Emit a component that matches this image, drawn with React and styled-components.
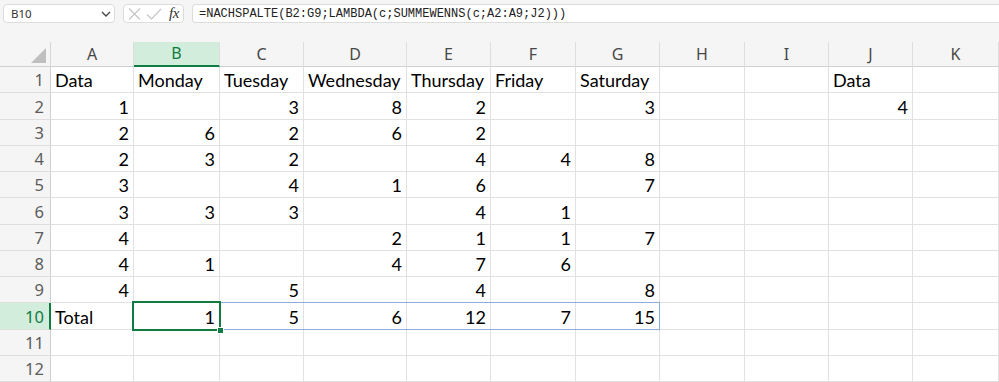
import React from 'react';
import styled, { createGlobalStyle } from 'styled-components';

const GlobalStyle = createGlobalStyle`
  html, body {
    margin: 0;
    padding: 0;
    background: #f5f5f5;
    overflow: hidden;
  }
`;

const Page = styled.div`
  width: 999px;
  height: 382px;
  background: #f5f5f5;
  overflow: hidden;
`;

const FormulaBar = styled.div`
  height: 42px;
  box-sizing: border-box;
  padding: 4px 0 0 3px;
  display: flex;
  align-items: flex-start;
  gap: 8px;
`;

const Box = styled.div`
  height: 19px;
  box-sizing: border-box;
  background: #fff;
  border: 1px solid #dcdcdc;
  border-radius: 4px;
  display: flex;
  align-items: center;
`;

const NameBox = styled(Box)`
  width: 112px;
  padding: 0 3px 0 7px;
  justify-content: space-between;
  font-family: "Noto Sans", "Open Sans", sans-serif;
  font-size: 11.5px;
  color: #333;
`;

const FxBox = styled(Box)`
  width: 61px;
  padding: 0 2px 0 4px;
  gap: 5px;
`;

const Fx = styled.span`
  font-family: "Liberation Serif", "DejaVu Serif", serif;
  font-style: italic;
  font-size: 15px;
  color: #333;
  margin-left: 2px;
  letter-spacing: -0.5px;
`;

const FormulaInput = styled(Box)`
  flex: 1;
  border-right: none;
  border-radius: 4px 0 0 4px;
  padding-left: 6px;
  font-family: "Liberation Mono", "DejaVu Sans Mono", monospace;
  font-size: 12px;
  color: #222;
  white-space: nowrap;
`;

const Sheet = styled.div`
  display: grid;
  grid-template-columns: 51px 83px 86px 84px 103px 84px 85px 84px 85px 84px 84px 86px;
  grid-template-rows: 25px 26px 27px 26px 26px 26px 27px 26px 26px 26px 27px 26px 26px;
`;

const Corner = styled.div`
  grid-column: 1;
  grid-row: 1;
  background: #f5f5f5;
  border-right: 1px solid #d6d6d6;
  border-bottom: 1px solid #d0d0d0;
  display: flex;
  align-items: flex-end;
  justify-content: flex-end;
  padding: 0 4px 3px 0;
  box-sizing: border-box;
`;

const ColHead = styled.div`
  grid-row: 1;
  grid-column: ${p => p.$col};
  box-sizing: border-box;
  background: ${p => (p.$active ? '#d3eddd' : '#f5f5f5')};
  color: ${p => (p.$active ? '#107c41' : '#474747')};
  border-right: 1px solid #dedede;
  border-bottom: ${p => (p.$active ? '2px solid #107c41' : '1px solid #d0d0d0')};
  font-family: "Noto Sans", "Open Sans", sans-serif;
  font-size: 16px;
  display: flex;
  align-items: center;
  justify-content: center;
  padding-bottom: 1px;
`;

const RowHead = styled.div`
  grid-column: 1;
  grid-row: ${p => p.$row};
  box-sizing: border-box;
  background: ${p => (p.$active ? '#d3eddd' : '#f5f5f5')};
  color: ${p => (p.$active ? '#107c41' : '#5c5c5c')};
  border-right: ${p => (p.$active ? '2px solid #107c41' : '1px solid #d0d0d0')};
  border-bottom: 1px solid #dedede;
  font-family: "Noto Sans", "Open Sans", sans-serif;
  font-size: 16.5px;
  display: flex;
  align-items: center;
  justify-content: flex-end;
  padding-right: ${p => (p.$active ? '5px' : '6px')};
`;

const Cell = styled.div`
  grid-column: ${p => p.$col};
  grid-row: ${p => p.$row};
  box-sizing: border-box;
  background: #fff;
  border-right: 1px solid #e1e1e1;
  border-bottom: 1px solid #e1e1e1;
  font-family: Lato, "Open Sans", sans-serif;
  font-size: 18px;
  color: #000;
  display: flex;
  align-items: flex-end;
  justify-content: ${p => (p.$num ? 'flex-end' : 'flex-start')};
  padding: 0 4px 1px 4px;
  line-height: 22px;
  white-space: nowrap;
`;

const ActiveCell = styled.div`
  grid-column: 3;
  grid-row: 11;
  margin: -2px -1px -1px -2px;
  border: 2px solid #107c41;
  position: relative;
  z-index: 2;
  pointer-events: none;
`;

const FillHandle = styled.div`
  position: absolute;
  right: -5px;
  bottom: -5px;
  width: 5px;
  height: 5px;
  background: #107c41;
  border: 1px solid #fff;
`;

const RangeOutline = styled.div`
  grid-column: 4 / 9;
  grid-row: 11;
  margin: -1px 0 0 0;
  border: 1px solid #8fabdc;
  border-left: none;
  z-index: 1;
  pointer-events: none;
`;

const columns = ['A', 'B', 'C', 'D', 'E', 'F', 'G', 'H', 'I', 'J', 'K'];

const data = [
  ['Data', 'Monday', 'Tuesday', 'Wednesday', 'Thursday', 'Friday', 'Saturday', '', '', 'Data', ''],
  [1, '', 3, 8, 2, '', 3, '', '', 4, ''],
  [2, 6, 2, 6, 2, '', '', '', '', '', ''],
  [2, 3, 2, '', 4, 4, 8, '', '', '', ''],
  [3, '', 4, 1, 6, '', 7, '', '', '', ''],
  [3, 3, 3, '', 4, 1, '', '', '', '', ''],
  [4, '', '', 2, 1, 1, 7, '', '', '', ''],
  [4, 1, '', 4, 7, 6, '', '', '', '', ''],
  [4, '', 5, '', 4, '', 8, '', '', '', ''],
  ['Total', 1, 5, 6, 12, 7, 15, '', '', '', ''],
  ['', '', '', '', '', '', '', '', '', '', ''],
  ['', '', '', '', '', '', '', '', '', '', ''],
];

const Chevron = () => (
  <svg width="10" height="6" viewBox="0 0 10 6">
    <path d="M1 1 L5 5 L9 1" fill="none" stroke="#444" strokeWidth="1.3" />
  </svg>
);

const Cross = () => (
  <svg width="13" height="12" viewBox="0 0 13 12">
    <path d="M1 0.5 L12 11.5 M12 0.5 L1 11.5" stroke="#c4c4c4" strokeWidth="1.1" fill="none" />
  </svg>
);

const Check = () => (
  <svg width="16" height="12" viewBox="0 0 16 12">
    <path d="M1 6.5 L5.5 11 L15 1" stroke="#c4c4c4" strokeWidth="1.1" fill="none" />
  </svg>
);

const Triangle = () => (
  <svg width="15" height="15" viewBox="0 0 15 15">
    <polygon points="15,0 15,15 0,15" fill="#bfbfbf" />
  </svg>
);

export default function App() {
  return (
    <Page>
      <GlobalStyle />
      <FormulaBar>
        <NameBox>
          <span>B10</span>
          <Chevron />
        </NameBox>
        <FxBox>
          <Cross />
          <Check />
          <Fx>fx</Fx>
        </FxBox>
        <FormulaInput>=NACHSPALTE(B2:G9;LAMBDA(c;SUMMEWENNS(c;A2:A9;J2)))</FormulaInput>
      </FormulaBar>
      <Sheet>
        <Corner>
          <Triangle />
        </Corner>
        {columns.map((c, i) => (
          <ColHead key={c} $col={i + 2} $active={c === 'B'}>{c}</ColHead>
        ))}
        {data.map((row, r) => (
          <React.Fragment key={r}>
            <RowHead $row={r + 2} $active={r === 9}>{r + 1}</RowHead>
            {row.map((v, c) => (
              <Cell key={c} $row={r + 2} $col={c + 2} $num={typeof v === 'number'}>{v}</Cell>
            ))}
          </React.Fragment>
        ))}
        <ActiveCell>
          <FillHandle />
        </ActiveCell>
        <RangeOutline />
      </Sheet>
    </Page>
  );
}
